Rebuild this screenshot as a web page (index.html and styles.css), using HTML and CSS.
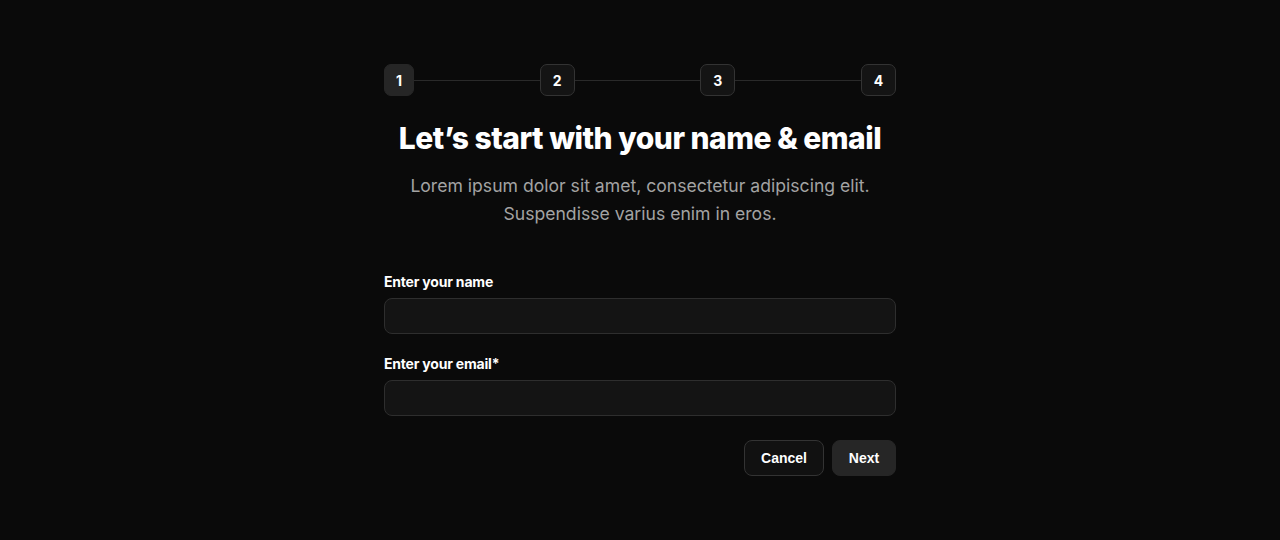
FILE: index.html
```html
<!DOCTYPE html>
<html lang="en">
<head>
<meta charset="utf-8">
<title>Signup</title>
<link rel="stylesheet" href="styles.css">
</head>
<body>
<main class="wrap">
  <div class="steps">
    <div class="step step-active">1</div>
    <div class="line"></div>
    <div class="step">2</div>
    <div class="line"></div>
    <div class="step">3</div>
    <div class="line"></div>
    <div class="step">4</div>
  </div>
  <h1 class="title">Let’s start with your name &amp; email</h1>
  <p class="sub">Lorem ipsum dolor sit amet, consectetur adipiscing elit.<br>Suspendisse varius enim in eros.</p>
  <form class="form">
    <label class="field">
      <span class="label">Enter your name</span>
      <input class="input" type="text">
    </label>
    <label class="field">
      <span class="label">Enter your email*</span>
      <input class="input" type="email">
    </label>
    <div class="actions">
      <button type="button" class="btn btn-outline">Cancel</button>
      <button type="button" class="btn btn-fill">Next</button>
    </div>
  </form>
</main>
</body>
</html>
```
FILE: styles.css
```css
html, body {
  margin: 0;
  padding: 0;
  background: #0a0a0a;
  color: #ffffff;
  font-family: Inter, "Noto Sans", sans-serif;
}
.wrap {
  width: 512px;
  margin: 0 auto;
  padding-top: 64px;
  display: flex;
  flex-direction: column;
}
.steps {
  display: flex;
  align-items: center;
}
.step {
  width: 35px;
  height: 32px;
  box-sizing: border-box;
  border: 1px solid #333333;
  background: #141414;
  border-radius: 7px;
  display: flex;
  align-items: center;
  justify-content: center;
  font-size: 14px;
  font-weight: 700;
}
.step-active {
  width: 30px;
  background: #262626;
  border-color: #262626;
}
.line {
  flex: 1;
  height: 1px;
  background: #2a2a2a;
}
.title {
  margin: 22px -20px 0;
  font-size: 30px;
  line-height: 40px;
  font-weight: 800;
  letter-spacing: -0.5px;
  text-align: center;
}
.sub {
  margin: 14px -20px 0;
  font-size: 17.6px;
  line-height: 28px;
  color: #a3a3a3;
  text-align: center;
}
.form {
  margin-top: 44px;
  display: flex;
  flex-direction: column;
  gap: 20px;
}
.field {
  display: flex;
  flex-direction: column;
  gap: 6px;
}
.label {
  font-size: 14px;
  line-height: 20px;
  font-weight: 700;
  letter-spacing: -0.2px;
}
.input {
  height: 36px;
  box-sizing: border-box;
  background: #141414;
  border: 1px solid #2e2e2e;
  border-radius: 8px;
  color: #fff;
  padding: 0 12px;
  font: inherit;
  font-size: 14px;
  outline: none;
}
.actions {
  margin-top: 4px;
  display: flex;
  justify-content: flex-end;
  gap: 8px;
}
.btn {
  height: 36px;
  box-sizing: border-box;
  border-radius: 8px;
  font-family: "Liberation Sans", Arial, sans-serif;
  font-size: 14px;
  font-weight: 700;
  color: #fff;
  cursor: pointer;
}
.btn-outline {
  width: 80px;
  background: #111111;
  border: 1px solid #333333;
}
.btn-fill {
  width: 64px;
  background: #262626;
  border: 1px solid #262626;
}
```
